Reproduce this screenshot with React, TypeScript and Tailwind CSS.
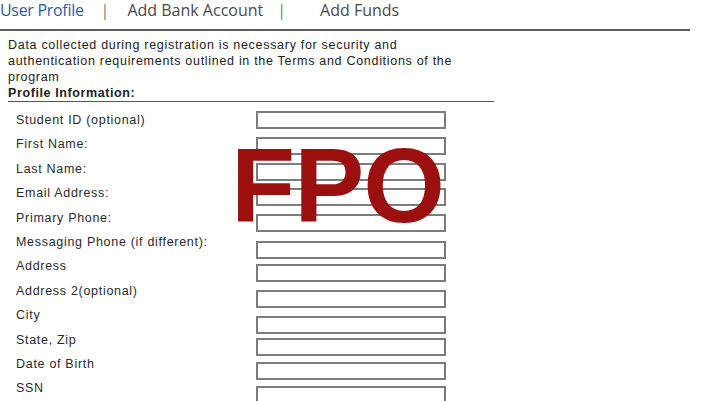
import React from 'react';

const labels = [
  'Student ID (optional)',
  'First Name:',
  'Last Name:',
  'Email Address:',
  'Primary Phone:',
  'Messaging Phone (if different):',
  'Address',
  'Address 2(optional)',
  'City',
  'State, Zip',
  'Date of Birth',
  'SSN',
];

// spacing between the boxes is uneven in the mockup, keep it that way
const boxGaps = [
  'mt-0',
  'mt-[8px]',
  'mt-[8px]',
  'mt-[7px]',
  'mt-[8px]',
  'mt-[9px]',
  'mt-[5px]',
  'mt-[8px]',
  'mt-[8px]',
  'mt-[4px]',
  'mt-[6px]',
  'mt-[6px]',
];

const App: React.FC = () => {
  return (
    <div className="relative w-[716px] h-[401px] overflow-hidden bg-white">
      {/* tabs */}
      <div className="flex items-center h-[31px] w-[690px] border-b-2 border-[#5a5a5a] pb-[9px] font-['Open_Sans',sans-serif] text-[16px] text-[#4a4a4a]">
        <span className="text-[#2a5ba8] tracking-[-0.3px]">User Profile</span>
        <span className="ml-[17px] text-[#777]">|</span>
        <span className="ml-[18px]">Add Bank Account</span>
        <span className="ml-[14px] text-[#777]">|</span>
        <span className="ml-[34px]">Add Funds</span>
      </div>

      <div className="pl-[8px] pt-[6px] font-['Liberation_Sans',Arial,sans-serif] text-[#222]">
        <p className="w-[470px] text-[12.5px] leading-[16px] tracking-[0.7px]">
          Data collected during registration is necessary for security and
          <br />
          authentication requirements outlined in the Terms and Conditions of the
          <br />
          program
        </p>
        <div className="w-[486px] border-b border-[#555] text-[12.5px] leading-[14px] font-bold tracking-[0.6px] pb-[1px] mt-[1px]">
          Profile Information:
        </div>

        <div className="flex mt-[6px]">
          <div className="flex flex-col w-[248px] pl-[8px] text-[12.5px] tracking-[0.7px] text-[#2a2a2a]">
            {labels.map(l => (
              <div key={l} className="h-[24.4px] leading-[24.4px]">
                {l}
              </div>
            ))}
          </div>
          <div className="flex flex-col pt-[3px]">
            {labels.map((l, i) => (
              <div key={l} className={`${boxGaps[i]} w-[190px] h-[18px] border-2 border-[#7c7c7c] bg-white`} />
            ))}
          </div>
        </div>
      </div>

      {/* placeholder stamp over the form */}
      <div className="absolute left-[231px] top-[133px] font-['Liberation_Sans',Arial,sans-serif] font-bold text-[105px] leading-none tracking-[-1px] text-[#9b0f0f]">
        FPO
      </div>
    </div>
  );
};

export default App;
